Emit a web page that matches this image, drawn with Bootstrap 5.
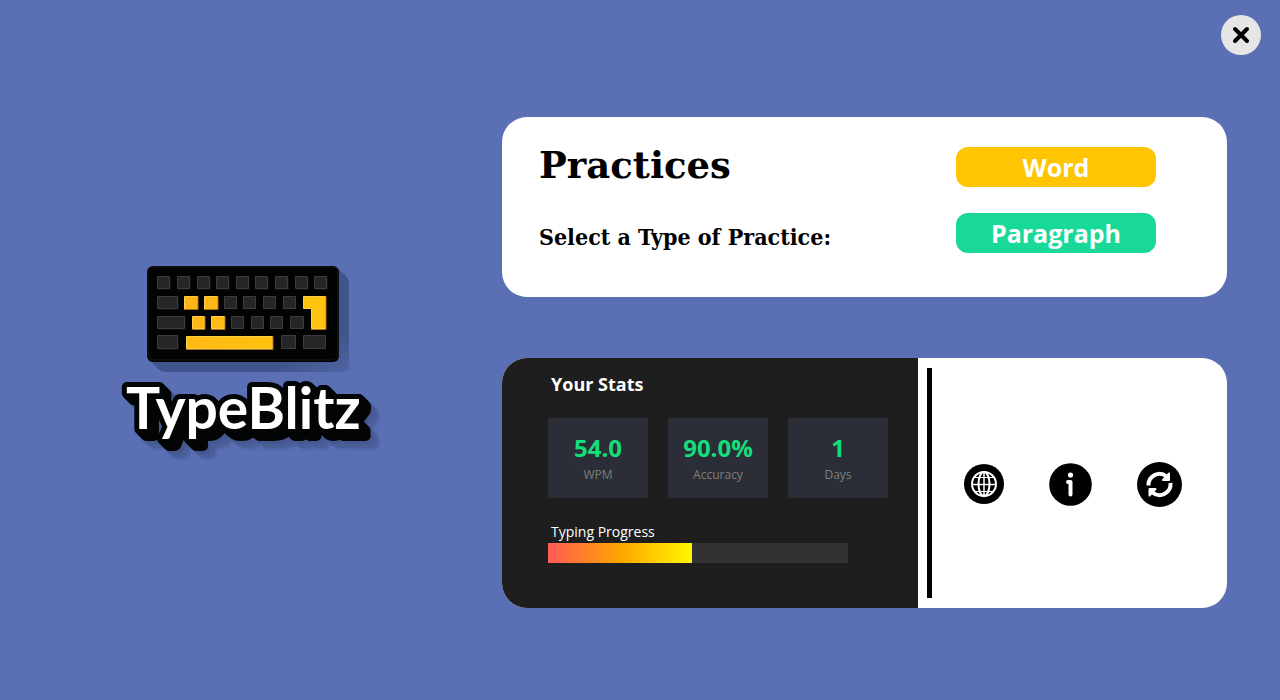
<!DOCTYPE html>
<html lang="en">
<head>
<meta charset="utf-8">
<meta name="viewport" content="width=device-width, initial-scale=1">
<title>TypeBlitz</title>
<link href="https://cdn.jsdelivr.net/npm/bootstrap@5.3.0/dist/css/bootstrap.min.css" rel="stylesheet">
<style>
  body { background: #5b70b4; font-family: "Open Sans", "Noto Sans", sans-serif; color: #000; }
  .close-btn { width: 40px; height: 40px; background: #e6e6e6; }
  .top-bar { padding: 15px 19px 0 0; }
  .brand-side { flex: 0 0 502px; padding: 0 8px 27px 0; }
  .wordmark { overflow: visible; }
  .wordmark text {
    font: 700 57px Lato, "Open Sans", sans-serif; fill: #fff;
    stroke: #030405; stroke-width: 10px; stroke-linejoin: round; paint-order: stroke fill;
    filter: drop-shadow(1px 1px 0 #030405) drop-shadow(2px 2px 0 #030405) drop-shadow(4px 4px 0 #030405)
      drop-shadow(1px 1px 0 #455890) drop-shadow(2px 2px 0 #455890) drop-shadow(4px 4px 0 #4a5e9a) drop-shadow(2px 2px 1px #5166a7);
  }
  .panel-side { padding: 62px 53px 40px 0; gap: 61px; }
  .panel { border-radius: 25px; background: #fff; }
  .practice { min-height: 180px; padding: 24px 71px 24px 37px; }
  .practice h1 { font: 700 37px/48px "DejaVu Serif", serif; margin: 0 0 32px; }
  .practice p { font: 700 23px/32px "DejaVu Serif Condensed", "DejaVu Serif", serif; margin: 0; }
  .choices { gap: 26px; padding-top: 6px; }
  .choice { width: 200px; height: 40px; border-radius: 12px; font-weight: 700; font-size: 25px; line-height: 38px; }
  .choice, .choice:hover { color: #fff; }
  .choice-word, .choice-word:hover { background: #ffc502; }
  .choice-para, .choice-para:hover { background: #18d998; }
  .stats-row { min-height: 250px; }
  .stats { flex: 0 1 416px; background: #1e1e1e; color: #fff; padding: 14px 30px 45px 46px; }
  .stats h2 { font-size: 18px; line-height: 24px; font-weight: 700; margin: 0 0 22px 3px; }
  .tiles { gap: 20px; margin-bottom: 22px; }
  .tile { width: 100px; height: 80px; background: #2b2e36; padding-top: 14px; }
  .tile dd { font-size: 24px; line-height: 32px; font-weight: 700; color: #12df7a; }
  .tile dt { font-size: 12px; line-height: 22px; font-weight: 400; color: #7e7e7e; }
  .progress-label { font-size: 14px; line-height: 23px; margin-left: 3px; }
  .meter { width: 300px; height: 20px; background: #323232; border-radius: 0; }
  .meter-fill { background: linear-gradient(90deg, #ff5b55, #ffa500 50%, #fff700); }
  .rule { width: 5px; background: #000; margin: 10px 0 10px 9px; }
  .links { padding: 2px 45px 0 32px; }
</style>
</head>
<body>
<div class="d-flex flex-column min-vh-100">
  <header class="top-bar d-flex justify-content-end">
    <button type="button" class="close-btn btn border-0 rounded-circle p-0 d-flex align-items-center justify-content-center" aria-label="Close">
      <svg width="20" height="20" viewBox="0 0 20 20" stroke="#000" stroke-width="4" stroke-linecap="round"><path d="M4 4 16 16M16 4 4 16"/></svg>
    </button>
  </header>

  <main class="d-flex flex-grow-1">
    <div class="brand-side d-flex flex-column align-items-center justify-content-center">
      <svg width="206" height="108" viewBox="144 264 206 108" role="img" aria-label="Keyboard">
        <defs>
          <linearGradient id="cast" x1="0" y1="0" x2="1" y2="1"><stop offset=".8" stop-color="#42548c"/><stop offset="1" stop-color="#5065a4"/></linearGradient>
          <linearGradient id="gold" x1="0" y1="0" x2="1" y2="1"><stop offset="0" stop-color="#ffb31a"/><stop offset="1" stop-color="#ffc20e"/></linearGradient>
        </defs>
        <path d="M149 360 158 369Q161 372 165 372H342Q349 372 349 365V283Q349 279 346 276L337 268Z" fill="url(#cast)"/>
        <rect x="147" y="266" width="192" height="96" rx="6" fill="#020303"/>
        <rect x="148" y="267" width="190" height="93" rx="6" fill="none" stroke="#171919"/>
        <g fill="#252627" stroke="#3b3c3d" stroke-width="1">
          <path d="M157.500 276.500h12v12h-12zM177.500 276.500h12v12h-12zM197.500 276.500h12v12h-12zM216.500 276.500h12v12h-12zM236.500 276.500h12v12h-12zM255.500 276.500h12v12h-12zM275.500 276.500h12v12h-12zM295.500 276.500h12v12h-12zM314.500 276.500h12v12h-12z"/>
          <path d="M157.500 296.500h20v12h-20zM224.500 296.500h12v12h-12zM243.500 296.500h12v12h-12zM263.500 296.500h12v12h-12zM283.500 296.500h12v12h-12z"/>
          <path d="M157.500 316.500h27v12h-27zM231.500 316.500h12v12h-12zM251.500 316.500h12v12h-12zM270.500 316.500h12v12h-12zM290.500 316.500h13v12h-13z"/>
          <path d="M157.500 335.500h20v13h-20zM281.500 335.500h14v13h-14zM303.500 335.500h22v13h-22z"/>
        </g>
        <path d="M158 289.500h12.500v-12M178 289.500h12.500v-12M198 289.500h12.500v-12M217 289.500h12.500v-12M237 289.500h12.500v-12M256 289.500h12.500v-12M276 289.500h12.500v-12M296 289.500h12.500v-12M315 289.500h12.500v-12M158 309.500h20.500v-12M158 329.500h27.500v-12M158 349.500h20.500v-12" fill="none" stroke="#101111"/>
        <g fill="url(#gold)" stroke="#ffcf45" stroke-width="1">
          <path d="M184.500 296.500h13v13h-13zM204.500 296.500h13v13h-13zM192.500 316.500h12v12h-12zM211.500 316.500h13v12h-13zM186.500 336.500h86v12h-86z"/>
          <path d="M303.500 296.500h22v32h-14v-20h-8z" fill="#ffc20e"/>
        </g>
        <path d="M184 309.500h14v-13M204 309.500h14v-13M192 329.500h13v-13M211 329.500h14v-13M186 349.500h87v-13M311 329.500h15v-33" fill="none" stroke="#a96f08"/>
      </svg>
      <svg class="wordmark" width="266" height="92" viewBox="0 0 266 92"><text x="12" y="57">TypeBlitz</text></svg>
    </div>

    <div class="panel-side flex-grow-1 d-flex flex-column">
      <section class="panel practice d-flex justify-content-between">
        <div>
          <h1>Practices</h1>
          <p>Select a Type of Practice:</p>
        </div>
        <div class="choices d-flex flex-column">
          <button type="button" class="choice choice-word btn border-0 p-0">Word</button>
          <button type="button" class="choice choice-para btn border-0 p-0">Paragraph</button>
        </div>
      </section>

      <section class="panel stats-row d-flex overflow-hidden">
        <div class="stats">
          <h2>Your Stats</h2>
          <div class="tiles d-flex">
            <dl class="tile d-flex flex-column-reverse justify-content-end text-center mb-0"><dt>WPM</dt><dd class="m-0">54.0</dd></dl>
            <dl class="tile d-flex flex-column-reverse justify-content-end text-center mb-0"><dt>Accuracy</dt><dd class="m-0">90.0%</dd></dl>
            <dl class="tile d-flex flex-column-reverse justify-content-end text-center mb-0"><dt>Days</dt><dd class="m-0">1</dd></dl>
          </div>
          <div class="progress-label" id="typing-progress">Typing Progress</div>
          <div class="meter progress" role="progressbar" aria-labelledby="typing-progress" aria-valuenow="48" aria-valuemin="0" aria-valuemax="100">
            <div class="meter-fill progress-bar" style="width:48%"></div>
          </div>
        </div>
        <div class="rule"></div>
        <nav class="links flex-grow-1 d-flex align-items-center justify-content-between" aria-label="More">
          <a href="#web" class="d-flex" aria-label="Website">
            <svg width="40" height="40" viewBox="0 0 40 40"><circle cx="20" cy="20" r="20" fill="#000"/><g fill="none" stroke="#fff" stroke-width="2"><circle cx="20" cy="20" r="12"/><ellipse cx="20" cy="20" rx="5.500" ry="12"/><path d="M20 8v24M8 20.500h24" stroke-width="1.500"/><path d="M11 13.500h18M11 27.500h18" stroke-width="1"/></g></svg>
          </a>
          <a href="#about" class="d-flex" aria-label="About">
            <svg width="43" height="43" viewBox="0 0 43 43"><circle cx="21.500" cy="21.500" r="21.300" fill="#000"/><circle cx="21.500" cy="12" r="2.600" fill="#fff"/><path d="M19 19h2.500v12.500" fill="none" stroke="#fff" stroke-width="4" stroke-linecap="round" stroke-linejoin="round"/></svg>
          </a>
          <a href="#refresh" class="d-flex" aria-label="Refresh">
            <svg width="45" height="45" viewBox="0 0 45 45"><circle cx="22.500" cy="22.500" r="22.500" fill="#000"/><g fill="none" stroke="#fff" stroke-width="4"><path d="M11.500 23.500A11 11 0 0 1 29.500 14.500"/><path d="M33.500 21A11 11 0 0 1 15.500 30.500"/></g><path d="M32 11.500v6.500h-6zM12.500 33.500v-6.500h6z" fill="#fff" stroke="#fff" stroke-width="2" stroke-linejoin="round"/></svg>
          </a>
        </nav>
      </section>
    </div>
  </main>
</div>
<script src="https://cdn.jsdelivr.net/npm/bootstrap@5.3.0/dist/js/bootstrap.bundle.min.js"></script>
</body>
</html>
